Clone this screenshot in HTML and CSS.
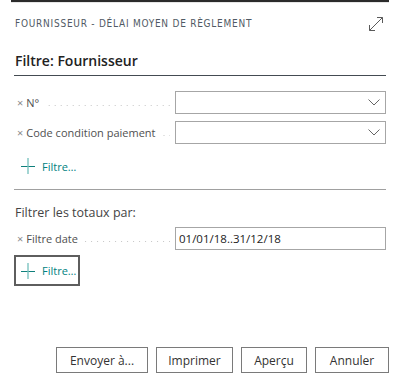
FILE: index.html
```html
<!DOCTYPE html>
<html>
<head>
  <meta charset="UTF-8">
  <title>Fournisseur - Délai moyen de règlement</title>
  <link rel="stylesheet" href="styles.css">
</head>
<body>
  <div class="topbar"></div>

  <div class="dialog">
    <div class="header">
      <h1>Fournisseur - Délai moyen de règlement</h1>
      <svg class="expand" width="16" height="16" viewBox="0 0 16 16">
        <path d="M1.5 14.5 L14.5 1.5 M9 1.5 H14.5 V7 M1.5 9 V14.5 H7" fill="none" stroke="#5a5a5a" stroke-width="1"/>
      </svg>
    </div>

    <h2 class="section-title">Filtre: Fournisseur</h2>

    <div class="fields">
      <div class="field">
        <label class="field-label"><span class="remove">&#215;</span>N°<span class="leader"></span></label>
        <div class="select">
          <svg width="12" height="7" viewBox="0 0 12 7"><path d="M0.5 0.5 L6 6 L11.5 0.5" fill="none" stroke="#666" stroke-width="1"/></svg>
        </div>
      </div>
      <div class="field">
        <label class="field-label"><span class="remove">&#215;</span>Code condition paiement<span class="leader"></span></label>
        <div class="select">
          <svg width="12" height="7" viewBox="0 0 12 7"><path d="M0.5 0.5 L6 6 L11.5 0.5" fill="none" stroke="#666" stroke-width="1"/></svg>
        </div>
      </div>
    </div>

    <div class="add-filter">
      <svg width="14" height="16" viewBox="0 0 14 16">
        <path d="M0 8.5 H14" stroke="#0f7f7b" stroke-width="1"/>
        <path d="M7 0 V16" stroke="#7cc3c0" stroke-width="1.4"/>
      </svg>
      <span>Filtre…</span>
    </div>

    <div class="separator"></div>

    <p class="subtitle">Filtrer les totaux par:</p>

    <div class="fields">
      <div class="field">
        <label class="field-label"><span class="remove">&#215;</span>Filtre date<span class="leader"></span></label>
        <div class="text-input">01/01/18..31/12/18</div>
      </div>
    </div>

    <div class="add-filter boxed">
      <svg width="14" height="16" viewBox="0 0 14 16">
        <path d="M0 8.5 H14" stroke="#0f7f7b" stroke-width="1"/>
        <path d="M7 0 V16" stroke="#7cc3c0" stroke-width="1.4"/>
      </svg>
      <span>Filtre…</span>
    </div>
  </div>

  <div class="actions">
    <button>Envoyer à...</button>
    <button>Imprimer</button>
    <button>Aperçu</button>
    <button>Annuler</button>
  </div>
</body>
</html>
```

FILE: styles.css
```css
:root {
  --text-color: #333333;
  --muted-color: #505a64;
  --label-color: #505050;
  --teal: #00827f;
  --input-border: #a6a6a6;
  --button-border: #7a7a7a;
}

* {
  box-sizing: border-box;
  margin: 0;
  padding: 0;
}

body {
  width: 400px;
  height: 383px;
  background-color: #ffffff;
  color: var(--text-color);
  font-family: 'Open Sans', 'Segoe UI', sans-serif;
  font-size: 11px;
  display: flex;
  flex-direction: column;
}

.topbar {
  height: 3px;
  margin: 0 11px;
  background-color: #2b2b2b;
  border-bottom: 1px solid #e6e6e6;
}

.dialog {
  flex: 1;
  padding: 0 14px;
}

.header {
  display: flex;
  align-items: center;
  justify-content: space-between;
  height: 38px;
  padding: 0 2px 0 1px;
}

h1 {
  font-family: 'DejaVu Sans Condensed', sans-serif;
  font-size: 10px;
  font-weight: 400;
  letter-spacing: 0.75px;
  text-transform: uppercase;
  color: var(--muted-color);
  margin-top: 2px;
}

.expand {
  margin-top: 4px;
}

.section-title {
  font-size: 14px;
  font-weight: 600;
  color: #222222;
  margin-top: 10px;
  padding: 0 1px 5px;
  border-bottom: 1px solid #444b52;
}

.fields {
  display: flex;
  flex-direction: column;
  gap: 7px;
}

.section-title + .fields {
  margin-top: 15px;
}

.field {
  display: grid;
  grid-template-columns: 156px 211px;
  gap: 5px;
  height: 23px;
}

.field-label {
  display: flex;
  align-items: center;
  padding-left: 3px;
  color: var(--label-color);
  white-space: nowrap;
}

.remove {
  color: #8a8a8a;
  font-size: 11px;
  margin-right: 3px;
}

.leader {
  flex: 1;
  align-self: stretch;
  margin-left: 6px;
  background-image: linear-gradient(to right, #c6c6c6 1px, transparent 1px);
  background-size: 6px 1px;
  background-position: right 1px top 14px;
  background-repeat: repeat-x;
}

.select,
.text-input {
  border: 1px solid var(--input-border);
  background-color: #ffffff;
}

.select {
  display: flex;
  align-items: center;
  justify-content: flex-end;
  padding-right: 5px;
}

.text-input {
  display: flex;
  align-items: center;
  padding-left: 3px;
  font-size: 11.5px;
  color: #222222;
}

.add-filter {
  display: inline-flex;
  align-items: center;
  gap: 7px;
  margin: 14px 0 0 7px;
  color: var(--teal);
  font-size: 11px;
}

.add-filter svg {
  flex-shrink: 0;
}

.separator {
  height: 1px;
  background-color: #a0a0a0;
  margin-top: 12px;
}

.subtitle {
  font-size: 12.5px;
  color: #444444;
  margin: 14px 0 6px 1px;
}

.add-filter.boxed {
  margin: 5px 0 0 0;
  padding: 0 5px;
  height: 31px;
  width: 66px;
  border: 2px solid #5e5e5e;
}

.actions {
  display: flex;
  justify-content: flex-end;
  gap: 8px;
  padding: 0 11px 10px 0;
}

button {
  height: 26px;
  border: 1px solid var(--button-border);
  background-color: #ffffff;
  color: var(--text-color);
  font-family: 'Open Sans', 'Segoe UI', sans-serif;
  font-size: 12px;
  padding: 0 10px;
  min-width: 64px;
}

button:first-child {
  width: 92px;
}

button:nth-child(2) {
  width: 77px;
}

button:nth-child(3) {
  width: 66px;
}

button:nth-child(4) {
  width: 74px;
}
```
